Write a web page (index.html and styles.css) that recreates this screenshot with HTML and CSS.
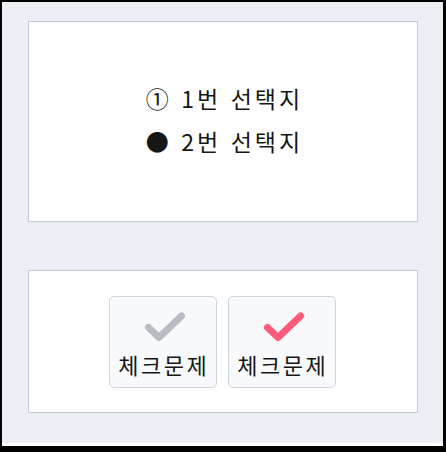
FILE: index.html
```html
<!DOCTYPE html>
<html lang="ko">
<head>
<meta charset="utf-8">
<link rel="stylesheet" href="styles.css">
</head>
<body>
<div class="frame">
  <div class="board">
    <section class="panel panel-choices">
      <ul class="choices">
        <li>① 1번 선택지</li>
        <li>● 2번 선택지</li>
      </ul>
    </section>
    <section class="panel panel-buttons">
      <button class="check-btn" type="button">
        <svg class="check" viewBox="0 0 42 32" width="42" height="32"><polyline points="4.5,16.5 15,26.5 37.5,5" fill="none" stroke="#b8bcc4" stroke-width="7" stroke-linecap="round" stroke-linejoin="round"/></svg>
        <span class="label">체크문제</span>
      </button>
      <button class="check-btn" type="button">
        <svg class="check" viewBox="0 0 42 32" width="42" height="32"><polyline points="4.5,16.5 15,26.5 37.5,5" fill="none" stroke="#ff5c7c" stroke-width="7" stroke-linecap="round" stroke-linejoin="round"/></svg>
        <span class="label">체크문제</span>
      </button>
    </section>
  </div>
</div>
</body>
</html>
```
FILE: styles.css
```css
html, body {
  margin: 0;
  padding: 0;
  background: #000;
}
body {
  width: 446px;
  height: 452px;
  overflow: hidden;
  font-family: "Noto Sans CJK KR", "Noto Sans", sans-serif;
  color: #161616;
}
.frame {
  margin: 2px 0 0 2px;
  width: 441px;
  background: #fff;
  padding-bottom: 3px;
}
.board {
  background: #ebeef3;
  height: 441px;
  box-sizing: border-box;
  padding: 19px 25px 0 26px;
  display: flex;
  flex-direction: column;
  gap: 48px;
}
.panel {
  background: #fff;
  border: 1px solid #bfcadb;
  box-sizing: border-box;
  width: 390px;
  display: flex;
  align-items: center;
  justify-content: center;
}
.panel-choices {
  height: 201px;
  padding-bottom: 4px;
}
.panel-buttons {
  height: 143px;
  gap: 11px;
  padding-right: 2px;
}
.choices {
  list-style: none;
  margin: 0;
  padding: 0;
  font-size: 23px;
  line-height: 43px;
  letter-spacing: 3px;
  margin-right: -3px;
}
.check-btn {
  width: 108px;
  height: 92px;
  box-sizing: border-box;
  background: #f8f9fb;
  border: 1px solid #d0d4db;
  border-radius: 5px;
  padding: 6px 0 0;
  margin: 0;
  display: flex;
  flex-direction: column;
  align-items: center;
  justify-content: center;
  font-family: inherit;
  color: #161616;
}
.check {
  display: block;
  margin-left: 4px;
}
.label {
  font-size: 22px;
  line-height: 30px;
  margin-top: 6px;
  letter-spacing: 2.5px;
  margin-right: -2.5px;
}
```
